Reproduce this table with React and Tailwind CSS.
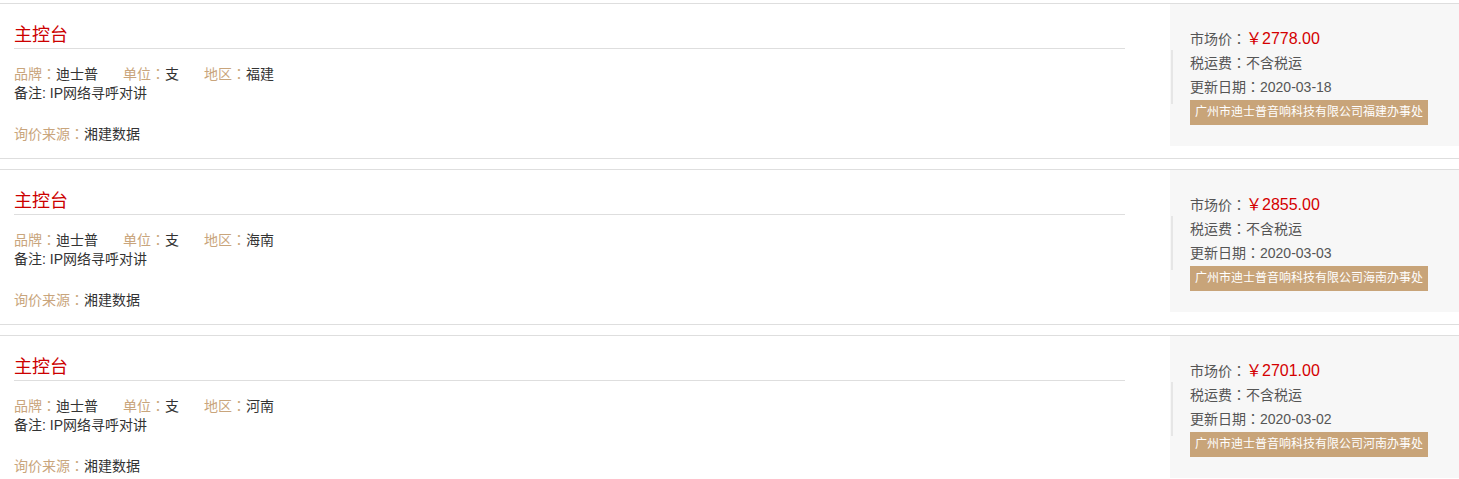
const items = [
  { price: "2778.00", date: "2020-03-18", area: "福建" },
  { price: "2855.00", date: "2020-03-03", area: "海南" },
  { price: "2701.00", date: "2020-03-02", area: "河南" },
];

// fullwidth colon centred in its cell, as in the reference font
const Colon = () => (
  <span className="leading-none" style={{ fontFamily: '"Noto Sans CJK TC", sans-serif' }}>
    ：
  </span>
);

function Label({ children }) {
  return (
    <span className="text-[#c9a57c]">
      {children}
      <Colon />
    </span>
  );
}

function Item({ item }) {
  return (
    <div className="mb-[10px] flex items-start border-y border-[#dedede] bg-white">
      <div className="flex-1 pb-[14px] pl-[14px] pr-[45px] pt-[18px]">
        <div className="border-b border-[#dedede] text-[18px] leading-[26px] text-[#cc0000]">主控台</div>
        <div className="mt-[16px] flex h-[19px] text-[14px] leading-[19px] text-[#333]">
          <span className="mr-[25px]">
            <Label>品牌</Label>迪士普
          </span>
          <span className="mr-[25px]">
            <Label>单位</Label>支
          </span>
          <span>
            <Label>地区</Label>
            {item.area}
          </span>
        </div>
        <div className="h-[19px] text-[14px] leading-[19px] text-[#333]">备注: IP网络寻呼对讲</div>
        <div className="mt-[22px] h-[19px] text-[14px] leading-[19px] text-[#333]">
          <Label>询价来源</Label>湘建数据
        </div>
      </div>
      <div className="relative h-[142px] w-[289px] bg-[#f7f7f7] pl-[20px] pt-[23px] text-[14px] text-[#555]">
        <div className="absolute left-[1px] top-[46px] h-[54px] w-[2px] bg-[#e6e6e6]" />
        <div className="h-[24px] leading-[24px]">
          市场价<Colon />
          <span className="text-[16px] text-[#d40000]">￥{item.price}</span>
        </div>
        <div className="h-[24px] leading-[24px]">
          税运费<Colon />不含税运
        </div>
        <div className="h-[24px] leading-[24px]">
          更新日期<Colon />
          {item.date}
        </div>
        <div className="mt-[1px] inline-block h-[25px] bg-[#c8a479] px-[5px] text-[12px] leading-[25px] text-white">
          广州市迪士普音响科技有限公司{item.area}办事处
        </div>
      </div>
    </div>
  );
}

export default function App() {
  return (
    <div
      className="min-h-screen bg-white pt-[3px]"
      style={{ fontFamily: '"Liberation Sans", "Noto Sans CJK SC", sans-serif' }}
    >
      {items.map((item, i) => (
        <Item key={i} item={item} />
      ))}
    </div>
  );
}
